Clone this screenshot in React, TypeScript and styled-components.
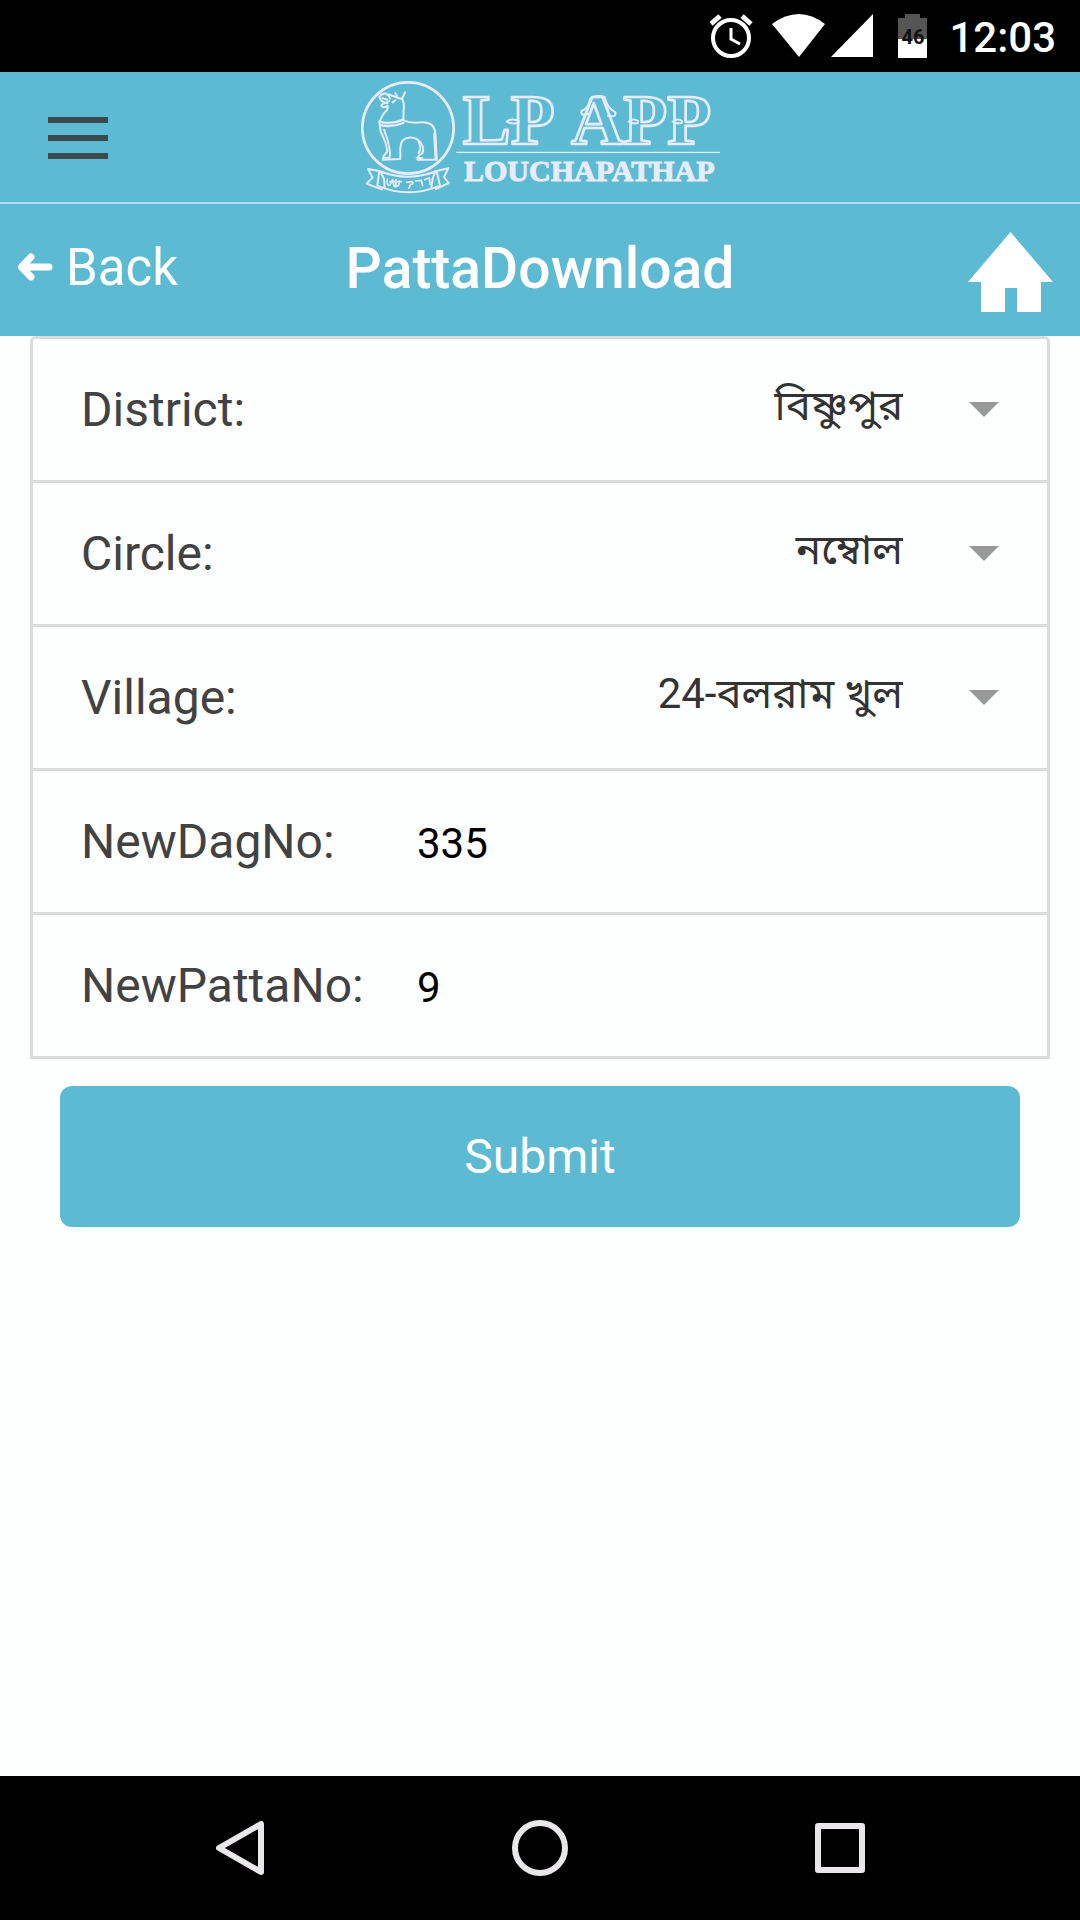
import React from "react";
import styled, { createGlobalStyle } from "styled-components";

const GlobalStyle = createGlobalStyle`
  *, *::before, *::after { box-sizing: border-box; }
  body {
    margin: 0;
    background: #fdfefe;
    font-family: Roboto, "Noto Sans Bengali", "Noto Sans", sans-serif;
  }
  button, input, select { font-family: inherit; margin: 0; padding: 0; border: 0; background: none; }
  svg { display: block; }
`;

const teal = "#5dbad3";
const line = "#dcdcdc";
const ink = "#e6ecfb";

const Page = styled.div`
  min-height: 100vh;
  display: flex;
  flex-direction: column;
`;

const StatusBar = styled.div`
  height: 72px;
  padding: 0 24px;
  background: #000;
  color: #fff;
  display: flex;
  align-items: center;
  justify-content: flex-end;
`;

const StatusIcons = styled.div`
  display: flex;
  margin-right: 22px;
`;

const Clock = styled.time`
  padding-top: 4px;
  font-size: 42px;
  font-weight: 500;
  line-height: 48px;
`;

const Header = styled.header`
  height: 132px;
  padding: 2px 48px 0;
  background: ${teal};
  border-bottom: 2px solid #b7dcf0;
  display: grid;
  grid-template-columns: 1fr auto 1fr;
  align-items: center;
`;

const MenuButton = styled.button`
  width: 60px;
  height: 42px;
  display: flex;
  flex-direction: column;
  justify-content: space-between;
`;

const MenuLine = styled.span`
  height: 6px;
  background: #3c494e;
`;

const TitleBar = styled.div`
  height: 132px;
  padding: 4px 16px 0;
  background: ${teal};
  color: #fff;
  display: grid;
  grid-template-columns: 1fr auto 1fr;
  align-items: center;
`;

const BackLink = styled.a`
  display: flex;
  align-items: center;
  gap: 12px;
  padding-bottom: 8px;
  color: #fff;
  font-size: 51px;
  line-height: 60px;
  text-decoration: none;
`;

const Title = styled.h1`
  margin: 0;
  padding-bottom: 6px;
  font-size: 57px;
  font-weight: 500;
  line-height: 66px;
`;

const HomeLink = styled.a`
  justify-self: end;
  margin-right: 11px;
`;

const Form = styled.form`
  padding: 0 30px;
`;

const Fields = styled.div`
  border: 3px solid ${line};
  border-bottom: 0;
  border-radius: 6px 6px 0 0;
`;

const Field = styled.div`
  height: 144px;
  padding: 0 48px;
  border-bottom: 3px solid ${line};
  display: flex;
  align-items: baseline;
`;

const Label = styled.label`
  min-width: 336px;
  color: #424242;
  font-size: 48px;
  line-height: 141px;
`;

const Picker = styled.div`
  flex: 1;
  align-self: center;
  display: flex;
  align-items: center;
`;

const Select = styled.select`
  flex: 1;
  min-width: 0;
  height: 80px;
  padding-bottom: 8px;
  appearance: none;
  color: #333;
  font-size: 42px;
  text-align: right;
  text-align-last: right;
`;

const Caret = styled.span`
  margin-left: 66px;
  border: 15px solid transparent;
  border-top-color: #999;
  border-bottom: 0;
`;

const NumberInput = styled.input`
  flex: 1;
  min-width: 0;
  color: #000;
  font-size: 42px;
  line-height: 50px;
`;

const SubmitButton = styled.button`
  display: block;
  width: calc(100% - 60px);
  height: 141px;
  margin: 27px auto 0;
  border-radius: 12px;
  background: ${teal};
  color: #fff;
  font-size: 48px;
`;

const NavBar = styled.nav`
  height: 144px;
  margin-top: auto;
  padding: 0 90px;
  background: #000;
  display: grid;
  grid-template-columns: repeat(3, 1fr);
`;

const NavButton = styled.button`
  display: flex;
  align-items: center;
  justify-content: center;
`;

const LogoType = styled.text`
  font-family: "Liberation Serif", serif;
  font-weight: 700;
`;

const Logo = () => (
  <svg width="360" height="114" viewBox="60 32 1080 342" role="img" aria-label="LP APP Louchapathap"
    fill="none" stroke={ink} strokeWidth="6" strokeLinejoin="round" strokeLinecap="round">
    <circle cx="204" cy="173" r="137" strokeWidth="8" />
    <path d="M118 160 Q122 138 140 120 Q146 112 142 106 Q130 116 124 106 Q126 98 138 98 L148 92 M142 98 Q126 96 122 88 L118 80 Q126 68 138 70 Q146 74 150 84 M146 72 L172 82 L166 68 M172 82 L186 86 L195 66 M186 84 Q194 100 191 120 L190 150 Q212 160 244 156 Q284 154 286 190 L290 268 L232 268 M236 266 Q232 256 246 250 Q254 236 244 220 Q232 200 206 202 Q182 204 181 232 V266 L128 268 Q130 254 142 244 Q140 220 128 196 Q120 184 120 166" />
    <path d="M118 154 Q154 164 190 148 M120 164 Q156 172 190 158" strokeWidth="7" />
    <path d="M132 178 Q146 210 150 244 Q152 256 146 266 M236 214 Q246 236 236 248 M128 84 L142 88 M158 96 L166 90 M230 262 L246 264 M134 262 L146 264" />
    <path d="M284 190 L288 266" strokeWidth="9" />
    <path d="M118 302 Q204 336 290 302 L300 346 Q204 386 112 346 Z M118 302 L84 296 L98 322 L80 340 L126 358 M290 302 L325 294 L312 320 L326 338 L288 356 M122 304 L132 326 L134 352 M286 304 L278 324 L274 352" />
    <path d="M142 326 Q138 346 150 344 L158 328 L162 348 L176 346 L178 332 M150 334 L184 334 M168 328 V350 M200 336 L216 334 Q224 342 212 342 L206 354 M226 332 L244 330 L248 346 M254 328 L268 322 L270 342" strokeWidth="5" />
    <path d="M350 246 H1140" strokeWidth="4" />
    <LogoType x="368" y="220" fontSize="216" strokeWidth="8">LP</LogoType>
    <LogoType x="694" y="220" fontSize="216" strokeWidth="8">APP</LogoType>
    <path d="M536 152 Q516 142 500 154 Q514 162 536 158 M894 152 Q880 142 866 154 Q878 162 894 158 M1026 152 Q1012 142 998 154 Q1010 162 1026 158" />
    <path d="M746 130 Q722 140 724 122 Q746 116 750 86 Q768 72 794 80 Q800 112 826 126 Q830 142 804 136" />
    <LogoType x="372" y="331" fontSize="90" fill={ink} strokeWidth="3">LOUCHAPATHAP</LogoType>
  </svg>
);

const AlarmIcon = () => (
  <svg width="62" height="44" viewBox="0 0 62 44" fill="none" stroke="#fff">
    <circle cx="21" cy="24" r="18" strokeWidth="4" />
    <path d="M21 14v11l9 5" strokeWidth="3" />
    <path d="M1 10 10 2M41 10 32 2" strokeWidth="5" />
  </svg>
);

const WifiIcon = () => (
  <svg width="59" height="44" viewBox="0 0 59 44" fill="#fff">
    <path d="M0 10Q27-10 53 10L27 43Z" />
  </svg>
);

const SignalIcon = () => (
  <svg width="67" height="44" viewBox="0 0 67 44" fill="#fff">
    <path d="M42 0V43H0Z" />
  </svg>
);

const BatteryIcon = () => (
  <svg width="29" height="44" viewBox="0 0 29 44">
    <path d="M0 4H7V0H22V4H29V26H0Z" fill="#555" />
    <path d="M0 25H29V44H0Z" fill="#fff" />
    <text x="15" y="30" textAnchor="middle" fontFamily="Roboto, sans-serif" fontWeight="700" fontSize="20" fill="#111">46</text>
  </svg>
);

const pickers = [
  { id: "district", label: "District:", value: "বিষ্ণুপুর" },
  { id: "circle", label: "Circle:", value: "নম্বোল" },
  { id: "village", label: "Village:", value: "24-বলরাম খুল" },
];

const numbers = [
  { id: "dag", label: "NewDagNo:", value: "335" },
  { id: "patta", label: "NewPattaNo:", value: "9" },
];

export default function App() {
  return (
    <Page>
      <GlobalStyle />
      <StatusBar>
        <StatusIcons>
          <AlarmIcon />
          <WifiIcon />
          <SignalIcon />
          <BatteryIcon />
        </StatusIcons>
        <Clock>12:03</Clock>
      </StatusBar>
      <Header>
        <MenuButton type="button" aria-label="Menu">
          <MenuLine />
          <MenuLine />
          <MenuLine />
        </MenuButton>
        <Logo />
      </Header>
      <TitleBar>
        <BackLink href="#back">
          <svg width="38" height="30" viewBox="0 0 38 30" fill="none" stroke="#fff" strokeWidth="7" strokeLinecap="round" strokeLinejoin="round">
            <path d="M33 14H7M15 4 5.500 14 15 24" />
          </svg>
          Back
        </BackLink>
        <Title>PattaDownload</Title>
        <HomeLink href="#home" aria-label="Home">
          <svg width="85" height="80" viewBox="0 0 85 80" fill="#fff">
            <path d="M42.500 0 85 50H73V80H49V56H37V80H13V50H0Z" />
          </svg>
        </HomeLink>
      </TitleBar>
      <Form onSubmit={(e) => e.preventDefault()}>
        <Fields>
          {pickers.map((f) => (
            <Field key={f.id}>
              <Label htmlFor={f.id}>{f.label}</Label>
              <Picker>
                <Select id={f.id} defaultValue={f.value}>
                  <option>{f.value}</option>
                </Select>
                <Caret />
              </Picker>
            </Field>
          ))}
          {numbers.map((f) => (
            <Field key={f.id}>
              <Label htmlFor={f.id}>{f.label}</Label>
              <NumberInput id={f.id} type="text" inputMode="numeric" defaultValue={f.value} />
            </Field>
          ))}
        </Fields>
        <SubmitButton type="submit">Submit</SubmitButton>
      </Form>
      <NavBar>
        <NavButton type="button" aria-label="Back">
          <svg width="48" height="56" viewBox="0 0 48 56" fill="none" stroke="#e9e7ea" strokeWidth="6" strokeLinejoin="round">
            <path d="M45 4V52L3 28Z" />
          </svg>
        </NavButton>
        <NavButton type="button" aria-label="Home">
          <svg width="56" height="56" viewBox="0 0 56 56" fill="none" stroke="#e9e7ea" strokeWidth="6">
            <circle cx="28" cy="28" r="25" />
          </svg>
        </NavButton>
        <NavButton type="button" aria-label="Overview">
          <svg width="50" height="50" viewBox="0 0 50 50" fill="none" stroke="#e9e7ea" strokeWidth="6" strokeLinejoin="round">
            <rect x="3" y="3" width="44" height="44" />
          </svg>
        </NavButton>
      </NavBar>
    </Page>
  );
}
